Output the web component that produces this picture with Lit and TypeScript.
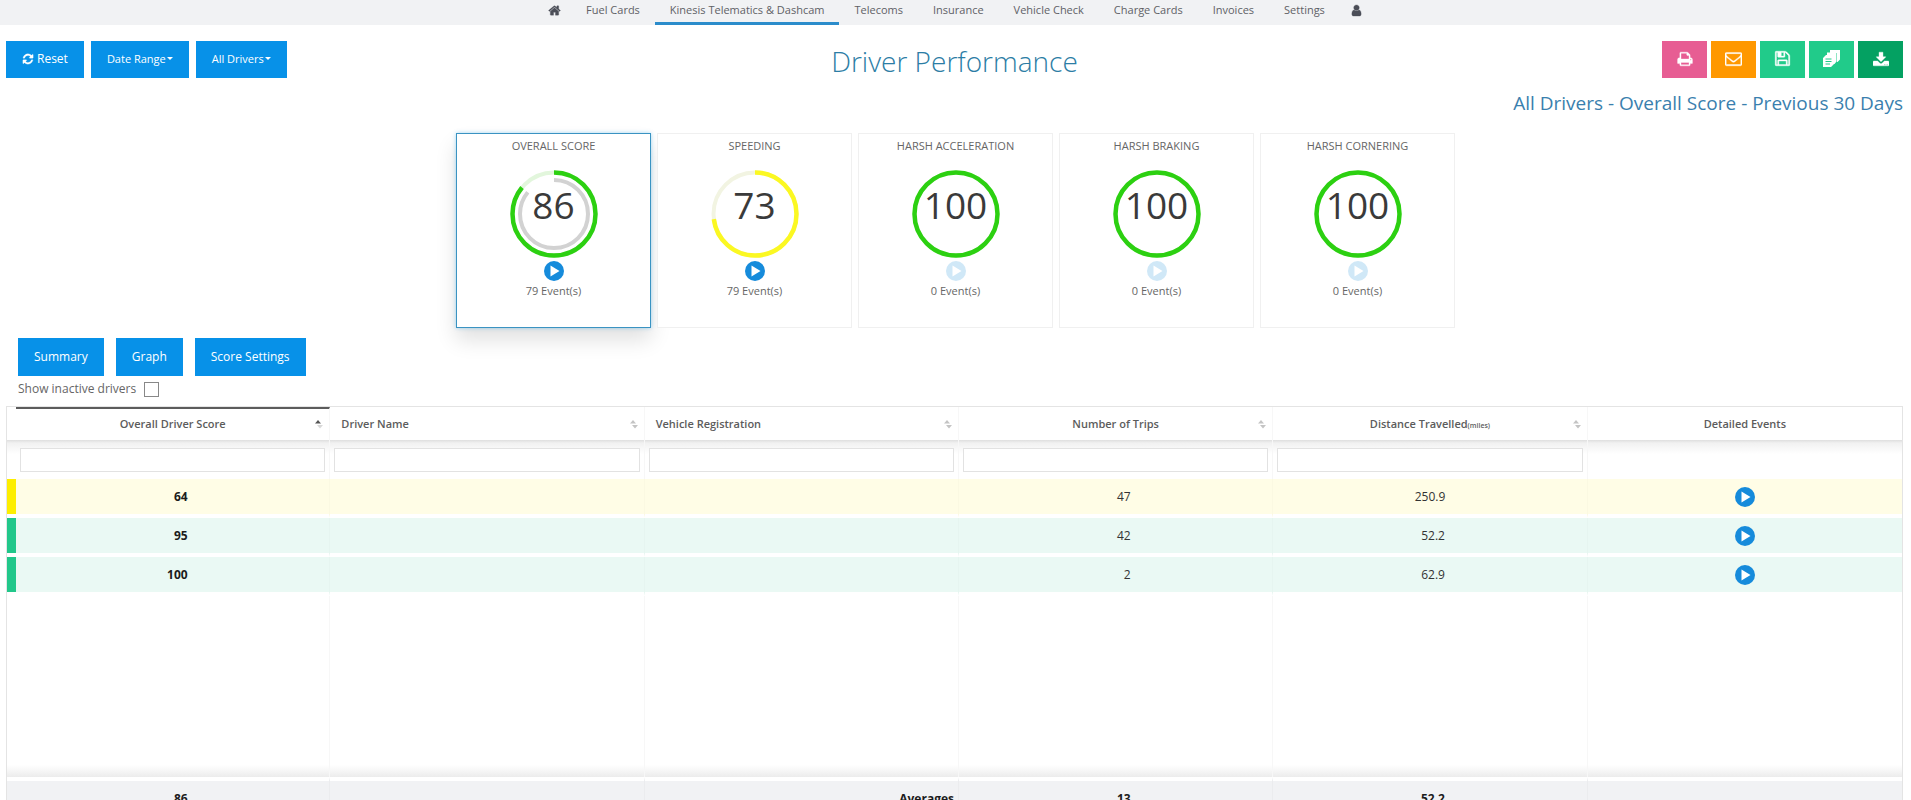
import { LitElement, html, css, svg, nothing } from "lit";
import { customElement, property } from "lit/decorators.js";

const ICONS: Record<string, string> = {
  home: "M1472 992v480q0 26-19 45t-45 19h-384v-384h-256v384h-384q-26 0-45-19t-19-45v-480q0-1 .5-3t.5-3l575-474 575 474q1 2 1 6zm223-69l-62 74q-8 9-21 11h-3q-13 0-21-7l-692-577-692 577q-12 8-24 7-13-2-21-11l-62-74q-8-10-7-23.5t11-21.5l719-599q32-26 76-26t76 26l244 204v-195q0-14 9-23t23-9h192q14 0 23 9t9 23v408l219 182q10 8 11 21.5t-7 23.5z",
  user: "M1536 1399q0 109-62.5 187t-150.5 78h-854q-88 0-150.5-78t-62.5-187q0-85 8.5-160.5t31.5-152 58.5-131 94-89 134.5-34.5q131 128 313 128t313-128q76 0 134.5 34.5t94 89 58.5 131 31.5 152 8.5 160.5zm-256-887q0 159-112.5 271.5t-271.5 112.5-271.5-112.5-112.5-271.5 112.5-271.5 271.5-112.5 271.5 112.5 112.5 271.5z",
  refresh: "M1639 1056q0 5-1 7-64 268-268 434.5t-478 166.5q-146 0-282.5-55t-243.5-157l-129 129q-19 19-45 19t-45-19-19-45v-448q0-26 19-45t45-19h448q26 0 45 19t19 45-19 45l-137 137q71 66 161 102t187 36q134 0 250-65t186-179q11-17 53-117 8-23 30-23h192q13 0 22.5 9.5t9.5 22.5zm25-800v448q0 26-19 45t-45 19h-448q-26 0-45-19t-19-45 19-45l138-138q-148-137-349-137-134 0-250 65t-186 179q-11 17-53 117-8 23-30 23h-199q-13 0-22.5-9.5t-9.5-22.5v-7q65-268 270-434.5t480-166.5q146 0 284 55.5t245 156.5l130-129q19-19 45-19t45 19 19 45z",
  print: "M448 1536h896v-256h-896v256zm0-640h896v-384h-160q-40 0-68-28t-28-68v-160h-640v640zm1152 64q0-26-19-45t-45-19-45 19-19 45 19 45 45 19 45-19 19-45zm128 0v416q0 13-9.5 22.5t-22.5 9.5h-224v160q0 40-28 68t-68 28h-960q-40 0-68-28t-28-68v-160h-224q-13 0-22.5-9.5t-9.5-22.5v-416q0-79 56.5-135.5t135.5-56.5h64v-544q0-40 28-68t68-28h672q40 0 88 20t76 48l152 152q28 28 48 76t20 88v256h64q79 0 135.5 56.5t56.5 135.5z",
  mail: "M1664 1504v-768q-32 36-69 66-268 206-426 338-51 43-83 67t-86.5 48.5-102.5 24.5h-2q-48 0-102.5-24.5t-86.5-48.5-83-67q-158-132-426-338-37-30-69-66v768q0 13 9.5 22.5t22.5 9.5h1472q13 0 22.5-9.5t9.5-22.5zm0-1051v-24.5l-.5-13-3-12.5-5.5-9-9-7.5-14-2.5h-1472q-13 0-22.5 9.5t-9.5 22.5q0 168 147 284 193 152 401 317 6 5 35 29.5t46 37.5 44.5 31.5 50.5 27.5 43 9h2q20 0 43-9t50.5-27.5 44.5-31.5 46-37.5 35-29.5q208-165 401-317 54-43 100.5-115.5t46.5-131.5zm128-37v1088q0 66-47 113t-113 47h-1472q-66 0-113-47t-47-113v-1088q0-66 47-113t113-47h1472q66 0 113 47t47 113z",
  save: "M512 1536h768v-384h-768v384zm896 0h128v-896q0-14-10-38.5t-20-34.5l-281-281q-10-10-34-20t-39-10v416q0 40-28 68t-68 28h-576q-40 0-68-28t-28-68v-416h-128v1280h128v-416q0-40 28-68t68-28h832q40 0 68 28t28 68v416zm-384-928v-320q0-13-9.5-22.5t-22.5-9.5h-192q-13 0-22.5 9.5t-9.5 22.5v320q0 13 9.5 22.5t22.5 9.5h192q13 0 22.5-9.5t9.5-22.5zm640 32v928q0 40-28 68t-68 28h-1344q-40 0-68-28t-28-68v-1344q0-40 28-68t68-28h928q40 0 88 20t76 48l280 280q28 28 48 76t20 88z",
  download: "M700 128h392q24 0 24 24v488h290q46 0 20 36l-496 500q-34 32-68 0L366 676q-26-36 20-36h290V152q0-24 24-24zM96 1120h420l240 236q140 124 280 0l240-236h420q96 0 96 96v352q0 96-96 96H96q-96 0-96-96v-352q0-96 96-96zm1232 350a62 62 0 1 0 1 0zm250 0a62 62 0 1 0 1 0z",
};

const icon = (name: string, size: number) => html`<svg class="icon" width=${size} height=${size} viewBox="0 0 1792 1792" aria-hidden="true">
  ${svg`<path fill="currentColor" stroke="currentColor" stroke-width="40" fill-rule="evenodd" d=${ICONS[name]} />`}
</svg>`;

const copies = html`<svg class="icon" width="17" height="17" viewBox="0 0 17 17" aria-hidden="true">
  <path fill="currentColor" d="M7 0h10v9.500l-2.500 2.500h-.5V3H7zM4 2.500h9.500v9L11.500 14H11V5.500H4zM3 5h8v9l-3 3H0V8z" />
  <path d="M2.500 9h6M2.500 11.500h6M2.500 14h4.500" stroke="#21cb8a" stroke-width="1" />
</svg>`;

const play = html`<svg class="icon" width="20" height="20" viewBox="0 0 20 20" aria-hidden="true">
  <circle cx="10" cy="10" r="10" fill="currentColor" />
  <path d="M6.500 4.500 15.500 10l-9 5.500z" fill="#fff" />
</svg>`;

@customElement("score-card")
class ScoreCard extends LitElement {
  @property() label = "";
  @property({ type: Number }) value = 0;
  @property({ type: Number }) events = 0;
  @property() tone = "#2cd011";
  @property({ type: Boolean, reflect: true }) selected = false;

  static styles = css`
    :host { display: flex; flex-direction: column; align-items: center; box-sizing: border-box; width: 195px; height: 195px;
      border: 1px solid #f0f0f0; background: #fff; color: #666; font-size: 11px; line-height: 16px; padding-top: 4px; }
    :host([selected]) { border-color: #3a93c2; box-shadow: 0 0 4px rgba(0, 150, 230, .35), 0 12px 20px rgba(0, 0, 0, .12); }
    .dial { display: grid; place-items: center; margin-top: 16px; height: 88px; }
    .dial > * { grid-area: 1 / 1; }
    .value { font-size: 37px; line-height: 40px; color: #3a3a3a; padding-bottom: 18px; }
    .play { border: 0; background: none; padding: 0; margin: 3px 0 2px; height: 20px; color: #168bdb; cursor: pointer; }
    .play:disabled { color: #d0e8f7; }
    .icon { display: block; }
  `;

  render() {
    return html`
      <span>${this.label}</span>
      <div class="dial">
        <svg width="88" height="88" viewBox="0 0 88 88" aria-hidden="true">
          <g transform="rotate(-90 44 44)" fill="none">
            <circle cx="44" cy="44" r="41.500" stroke="${this.tone === "#2cd011" ? "#e2f6dc" : "#f2f4e2"}" stroke-width="4" />
            <circle cx="44" cy="44" r="41.500" stroke=${this.tone} stroke-width="4.500" pathLength="100" stroke-dasharray="${this.value} 100" />
            ${this.selected ? svg`<circle cx="44" cy="44" r="34" stroke="#d2d2d2" stroke-width="4" pathLength="100" stroke-dasharray="86 100" />` : nothing}
          </g>
        </svg>
        <span class="value">${this.value}</span>
      </div>
      <button class="play" ?disabled=${!this.events} aria-label="Show events">${play}</button>
      <span>${this.events} Event(s)</span>
    `;
  }
}

const NAV = ["Fuel Cards", "Kinesis Telematics & Dashcam", "Telecoms", "Insurance", "Vehicle Check", "Charge Cards", "Invoices", "Settings"];

const CARDS = [
  { label: "OVERALL SCORE", value: 86, events: 79, tone: "#2cd011" },
  { label: "SPEEDING", value: 73, events: 79, tone: "#fbf822" },
  { label: "HARSH ACCELERATION", value: 100, events: 0, tone: "#2cd011" },
  { label: "HARSH BRAKING", value: 100, events: 0, tone: "#2cd011" },
  { label: "HARSH CORNERING", value: 100, events: 0, tone: "#2cd011" },
];

const ACTIONS = [
  { name: "Print", cls: "pink", glyph: icon("print", 16) },
  { name: "Email", cls: "orange", glyph: icon("mail", 17) },
  { name: "Save", cls: "green", glyph: icon("save", 17) },
  { name: "Copy", cls: "green", glyph: copies },
  { name: "Download", cls: "dark", glyph: icon("download", 16) },
];

const COLUMNS = [
  { title: "Overall Driver Score", cls: "sorted" },
  { title: "Driver Name", cls: "left" },
  { title: "Vehicle Registration", cls: "left" },
  { title: "Number of Trips", cls: "" },
  { title: "Distance Travelled", unit: "(miles)", cls: "" },
];

const ROWS = [
  { score: "64", trips: "47", miles: "250.9", cls: "amber" },
  { score: "95", trips: "42", miles: "52.2", cls: "good" },
  { score: "100", trips: "2", miles: "62.9", cls: "good" },
];

@customElement("app-root")
class AppRoot extends LitElement {
  static styles = css`
    :host { display: block; height: 100vh; overflow: hidden; background: #fff; color: #666; font: 12px/16px "Open Sans", "Noto Sans", sans-serif; }
    .icon { display: block; }
    button { font: inherit; border: 0; border-radius: 0; cursor: pointer; }

    nav { display: flex; justify-content: center; height: 25px; background: #f1f2f4; font-size: 11px; }
    nav a { display: flex; align-items: center; padding: 0 15px 6px; color: #5f6166; text-decoration: none; white-space: nowrap; }
    nav a.active { padding-bottom: 3px; border-bottom: 3px solid #2b8ccb; }
    nav a.glyph { color: #4b4e57; padding: 0 10px 4px; }

    .toolbar { display: grid; grid-template-columns: 1fr auto 1fr; align-items: start; padding: 16px 8px 0 6px; }
    .group { display: flex; gap: 7px; }
    .btn { display: flex; align-items: center; gap: 3px; height: 37px; padding: 0 16px 2px; background: #0791e8; color: #fff; white-space: nowrap; }
    .btn.small { font-size: 11px; gap: 1px; }
    .caret { border: 3px solid transparent; border-top-color: currentColor; border-bottom: 0; }
    h1 { margin: 0; font-size: 28px; line-height: 40px; font-weight: 300; color: #2c7da5; }
    .actions { display: flex; justify-content: flex-end; gap: 4px; }
    .action { display: grid; place-items: center; width: 45px; height: 37px; padding: 0 0 2px; color: #fff; }
    .pink { background: #e75d93; }
    .orange { background: #ff9800; }
    .green { background: #21cb8a; }
    .dark { background: #04a162; }
    h2 { margin: 8px 8px 0; text-align: right; font-size: 19px; line-height: 28px; font-weight: 400; color: #3a7fae; }

    .cards { display: flex; justify-content: center; gap: 6px; margin-top: 16px; }
    .tabs { display: flex; gap: 12px; margin: 10px 18px 0; }
    .tabs .btn { height: 38px; padding-bottom: 0; }
    .inactive { display: flex; align-items: center; gap: 8px; width: max-content; margin: 4px 18px 0; height: 18px; }
    .inactive input { appearance: none; width: 15px; height: 15px; margin: 0; border: 1px solid #888; background: #fff; }

    table { width: calc(100% - 14px); margin: 8px 8px 0 6px; border: 1px solid #e4e4e4; border-bottom: 0; border-spacing: 0; table-layout: fixed; box-sizing: border-box; }
    .edge { width: 9px; }
    th, td { box-sizing: border-box; padding: 0; border-right: 1px solid #f7f7f7; text-align: center; overflow: hidden; }
    th:first-child, td:first-child, th:last-child, td:last-child { border-right: 0; }
    th { height: 33px; font-size: 11px; font-weight: 600; color: #5c5c5c; }
    thead th.sorted { border-top: 2px solid #5c5c5c; }
    thead th.sorted .head { padding-bottom: 2px; }
    .head { display: grid; grid-template-columns: 8px 1fr 8px; align-items: center; padding: 0 6px; }
    .head > span { grid-column: 2; }
    .left .head { text-align: left; grid-template-columns: 5px 1fr 8px; }
    .unit { font-size: 7px; line-height: 1; }
    .filters td { height: 39px; background: linear-gradient(#dedede, #f1f1f1 3px, #fff 14px); }
    .filters input { display: block; box-sizing: border-box; width: calc(100% - 8px); height: 24px; margin: 0 4px; border: 1px solid #e2e2e2; background: #fff; }
    .data td { height: 39px; border-bottom: 4px solid #fff; color: #333; }
    .data .play { display: block; margin: 0 auto; padding: 0; background: none; color: #168bdb; }
    .data.amber td { background: #fffde6; background-clip: padding-box; border-right-color: #fbf9e2; }
    .data.good td { background: #eaf9f4; background-clip: padding-box; border-right-color: #e6f5f0; }
    .data.amber td.mark { background-color: #fdee00; }
    .data.good td.mark { background-color: #21c78a; }
    .num { display: inline-block; min-width: 30px; text-align: right; }
    .strong { font-weight: 700; color: #1c1c1c; }
    .space td { height: 181px; background: linear-gradient(#fff calc(100% - 12px), #ececec); }
    tfoot td { height: 40px; border-top: 4px solid #fff; background: #f1f2f4; background-clip: padding-box; border-right-color: #ebecee; font-weight: 700; color: #1c1c1c; }
    tfoot .avg { text-align: right; padding-right: 4px; }
  `;

  private sorter(active: boolean) {
    return html`<svg class="icon" width="8" height="10" viewBox="0 0 8 10" aria-hidden="true">
      <path d="M0 4.500 3 1l3 3.500z" fill=${active ? "#555" : "#c4c4c4"} />
      <path d="M2 6h6L5 9.500z" fill=${active ? "#d8d8d8" : "#c4c4c4"} />
    </svg>`;
  }

  render() {
    return html`
      <nav>
        <a class="glyph" href="#" aria-label="Home">${icon("home", 13)}</a>
        ${NAV.map((n, i) => html`<a href="#" class=${i === 1 ? "active" : ""}>${n}</a>`)}
        <a class="glyph" href="#" aria-label="Account">${icon("user", 13)}</a>
      </nav>

      <header class="toolbar">
        <div class="group">
          <button class="btn">${icon("refresh", 12)}Reset</button>
          <button class="btn small">Date Range<span class="caret"></span></button>
          <button class="btn small">All Drivers<span class="caret"></span></button>
        </div>
        <h1>Driver Performance</h1>
        <div class="actions">
          ${ACTIONS.map((a) => html`<button class="action ${a.cls}" aria-label=${a.name}>${a.glyph}</button>`)}
        </div>
      </header>
      <h2>All Drivers - Overall Score - Previous 30 Days</h2>

      <section class="cards">
        ${CARDS.map((c, i) => html`<score-card .label=${c.label} .value=${c.value} .events=${c.events} .tone=${c.tone} ?selected=${i === 0}></score-card>`)}
      </section>

      <div class="tabs">
        <button class="btn">Summary</button>
        <button class="btn">Graph</button>
        <button class="btn">Score Settings</button>
      </div>
      <label class="inactive">Show inactive drivers <input type="checkbox" /></label>

      <table>
        <colgroup><col class="edge" />${[1, 2, 3, 4, 5, 6].map(() => html`<col />`)}</colgroup>
        <thead>
          <tr>
            <th></th>
            ${COLUMNS.map((c, i) => html`<th class=${c.cls} scope="col"><div class="head">
              <span>${c.title}${c.unit ? html`<span class="unit">${c.unit}</span>` : nothing}</span>${this.sorter(i === 0)}
            </div></th>`)}
            <th scope="col">Detailed Events</th>
          </tr>
        </thead>
        <tbody>
          <tr class="filters">
            <td></td>
            ${COLUMNS.map((c) => html`<td><input type="text" aria-label="Filter ${c.title}" /></td>`)}
            <td></td>
          </tr>
          ${ROWS.map((r) => html`<tr class="data ${r.cls}">
            <td class="mark"></td>
            <td><span class="num strong">${r.score}</span></td>
            <td></td>
            <td></td>
            <td><span class="num">${r.trips}</span></td>
            <td><span class="num">${r.miles}</span></td>
            <td><button class="play" aria-label="Detailed events">${play}</button></td>
          </tr>`)}
          <tr class="space">${[0, 1, 2, 3, 4, 5, 6].map(() => html`<td></td>`)}</tr>
        </tbody>
        <tfoot>
          <tr>
            <td></td>
            <td><span class="num">86</span></td>
            <td></td>
            <td class="avg">Averages</td>
            <td><span class="num">13</span></td>
            <td><span class="num">52.2</span></td>
            <td></td>
          </tr>
        </tfoot>
      </table>
    `;
  }
}
